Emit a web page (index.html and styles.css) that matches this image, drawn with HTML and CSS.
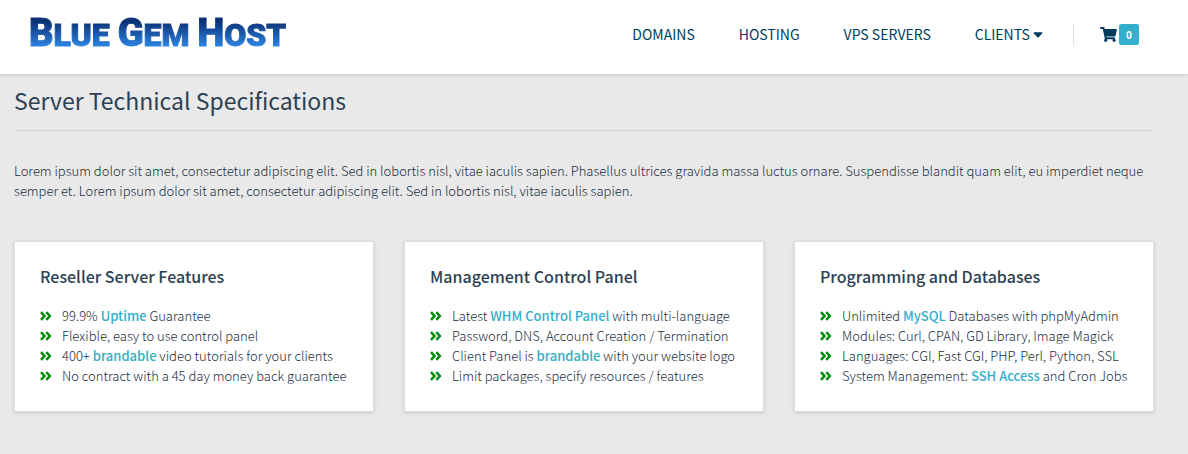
FILE: index.html
```html
<!DOCTYPE html>
<html lang="en">
<head>
    <meta charset="UTF-8">
    <meta name="viewport" content="width=device-width, initial-scale=1.0">
    <title>Blue Gem Host</title>
    <link rel="stylesheet" href="styles.css">
</head>
<body>
    <svg class="sprite" aria-hidden="true">
        <symbol id="angles" viewBox="0 0 12 10">
            <path d="M1 1.200 L4.500 5 L1 8.800 M6.300 1.200 L9.800 5 L6.300 8.800" fill="none" stroke="currentColor" stroke-width="2.500"/>
        </symbol>
    </svg>

    <header class="header">
        <a href="#" class="logo"><span>B</span>LUE <span>G</span>EM <span>H</span>OST</a>
        <nav class="nav">
            <a href="#">DOMAINS</a>
            <a href="#">HOSTING</a>
            <a href="#">VPS SERVERS</a>
            <a href="#">CLIENTS <svg class="caret" viewBox="0 0 10 6" aria-hidden="true"><path d="M1.2 .3h7.6q1 .2.4 1L5.7 5.2q-.7.6-1.4 0L.8 1.3Q.2.5 1.200.3z"/></svg></a>
        </nav>
        <a href="#" class="cart" aria-label="Shopping cart">
            <svg viewBox="0 0 576 512" aria-hidden="true"><path d="M528.1 301.300l47.300-208C578.800 78.300 567.400 64 552 64H159.200l-9.200-44.800C147.800 8 137.900 0 126.500 0H24C10.700 0 0 10.700 0 24v16c0 13.300 10.700 24 24 24h69.900l70.200 343.400C147.300 417.100 136 435.200 136 456c0 30.900 25.100 56 56 56s56-25.100 56-56c0-15.700-6.400-29.800-16.800-40h209.600C430.400 426.200 424 440.300 424 456c0 30.900 25.100 56 56 56s56-25.100 56-56c0-22.200-12.900-41.300-31.600-50.400l5.500-24.300c3.400-15-8-29.300-23.400-29.300H218.100l-6.500-32h293.100c11.200 0 20.900-7.800 23.400-18.700z"/></svg>
            <span class="badge">0</span>
        </a>
    </header>

    <main class="content">
        <h1>Server Technical Specifications</h1>
        <p class="intro">Lorem ipsum dolor sit amet, consectetur adipiscing elit. Sed in lobortis nisl, vitae iaculis sapien. Phasellus ultrices gravida massa luctus ornare. Suspendisse blandit quam elit, eu imperdiet neque semper et. Lorem ipsum dolor sit amet, consectetur adipiscing elit. Sed in lobortis nisl, vitae iaculis sapien.</p>

        <div class="cards">
            <section class="card">
                <h2>Reseller Server Features</h2>
                <ul>
                    <li><svg><use href="#angles"/></svg><span>99.9% <a href="#">Uptime</a> Guarantee</span></li>
                    <li><svg><use href="#angles"/></svg><span>Flexible, easy to use control panel</span></li>
                    <li><svg><use href="#angles"/></svg><span>400+ <a href="#">brandable</a> video tutorials for your clients</span></li>
                    <li><svg><use href="#angles"/></svg><span>No contract with a 45 day money back guarantee</span></li>
                </ul>
            </section>
            <section class="card">
                <h2>Management Control Panel</h2>
                <ul>
                    <li><svg><use href="#angles"/></svg><span>Latest <a href="#">WHM Control Panel</a> with multi-language</span></li>
                    <li><svg><use href="#angles"/></svg><span>Password, DNS, Account Creation / Termination</span></li>
                    <li><svg><use href="#angles"/></svg><span>Client Panel is <a href="#">brandable</a> with your website logo</span></li>
                    <li><svg><use href="#angles"/></svg><span>Limit packages, specify resources / features</span></li>
                </ul>
            </section>
            <section class="card">
                <h2>Programming and Databases</h2>
                <ul>
                    <li><svg><use href="#angles"/></svg><span>Unlimited <a href="#">MySQL</a> Databases with phpMyAdmin</span></li>
                    <li><svg><use href="#angles"/></svg><span>Modules: Curl, CPAN, GD Library, Image Magick</span></li>
                    <li><svg><use href="#angles"/></svg><span>Languages: CGI, Fast CGI, PHP, Perl, Python, SSL</span></li>
                    <li><svg><use href="#angles"/></svg><span>System Management: <a href="#">SSH Access</a> and Cron Jobs</span></li>
                </ul>
            </section>
        </div>
    </main>
</body>
</html>
```
FILE: styles.css
```css
* {
    box-sizing: border-box;
}

body {
    margin: 0;
    background-color: #e9e9e9;
    color: #182e42;
    font-family: "Noto Sans CJK SC", "Noto Sans", sans-serif;
    font-size: 13px;
    font-weight: 300;
    line-height: 20px;
}

a {
    color: #33aecb;
    text-decoration: none;
}

.sprite {
    display: none;
}

.header {
    display: flex;
    align-items: center;
    height: 74px;
    padding: 0 49px 6px 29px;
    background-color: #fff;
    box-shadow: 0 1px 4px rgba(0, 0, 0, 0.15);
}

.logo {
    font-family: Roboto, sans-serif;
    font-size: 32px;
    font-weight: 900;
    line-height: 42px;
    color: transparent;
    background: linear-gradient(#0a2f73 20%, #2e86e6 80%);
    -webkit-background-clip: text;
    background-clip: text;
    -webkit-text-stroke: 1px transparent;
}

.logo span {
    font-size: 38px;
}

.nav {
    display: flex;
    gap: 44px;
    margin-left: auto;
    font-size: 14px;
    font-weight: 400;
}

.nav a {
    color: #003d5c;
}

.caret {
    width: 10px;
    height: 6px;
    fill: #003d5c;
    vertical-align: 2px;
}

.cart {
    display: flex;
    align-items: center;
    gap: 2px;
    margin-left: 30px;
    padding-left: 26px;
    border-left: 1px solid #ddd;
}

.cart svg {
    width: 17px;
    height: 15px;
    fill: #003d5c;
}

.badge {
    width: 20px;
    border-radius: 2px;
    background-color: #33aecb;
    color: #fff;
    font-size: 10px;
    font-weight: bold;
    line-height: 21px;
    text-align: center;
}

.content {
    padding: 10px 34px 40px 14px;
}

h1 {
    margin: 0 0 30px;
    padding-bottom: 14px;
    border-bottom: 1px solid #d5d5d5;
    color: #2c4154;
    font-size: 23px;
    font-weight: 400;
    line-height: 32px;
}

.intro {
    margin: 0 0 40px;
}

.cards {
    display: grid;
    grid-template-columns: repeat(3, minmax(0, 1fr));
    gap: 30px;
}

.card {
    padding: 24px 25px 25px;
    border: 1px solid #e2dcdd;
    background-color: #fff;
    box-shadow: 0 1px 4px rgba(0, 0, 0, 0.14);
}

h2 {
    margin: 0 0 20px;
    color: #2c4154;
    font-size: 16px;
    font-weight: 500;
    line-height: 20px;
}

ul {
    margin: 0;
    padding: 0;
    list-style: none;
}

li {
    display: flex;
    align-items: center;
    gap: 10px;
    white-space: nowrap;
}

li svg {
    width: 12px;
    height: 10px;
    color: #008a0e;
}

li a {
    font-weight: 500;
}
```
